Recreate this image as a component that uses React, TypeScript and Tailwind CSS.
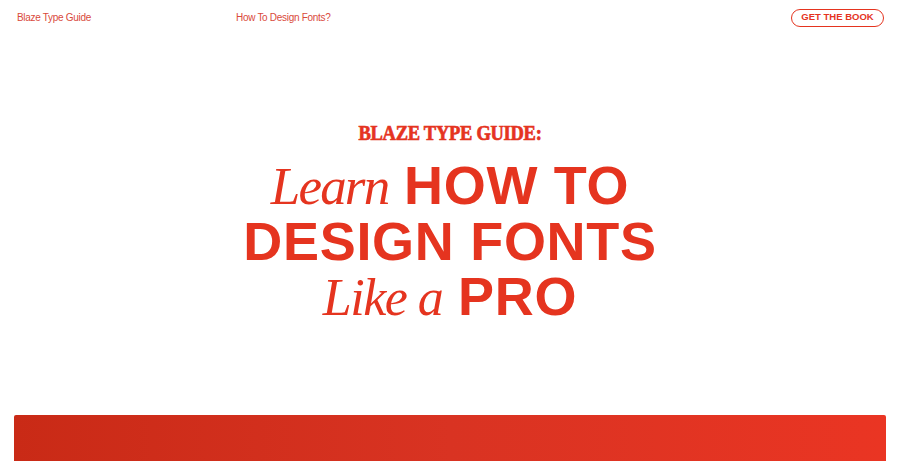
import React from "react";

const RED = "text-[#e5341f]";

export default function App() {
  return (
    <div className="min-h-[461px] w-full overflow-hidden bg-white font-['Liberation_Sans',Arial,sans-serif]">
      {/* top nav */}
      <header className="flex h-[35px] items-center px-[17px]">
        <a className="w-[219px] text-[10px] tracking-[-0.3px] text-[#d9493b]">Blaze Type Guide</a>
        <a className="text-[10px] tracking-[-0.3px] text-[#d9493b]">How To Design Fonts?</a>
        <button className="ml-auto mr-[-1px] flex h-[18px] w-[93px] items-center justify-center rounded-full border border-[#e5341f] text-[9.5px] font-bold text-[#e5341f]">
          GET THE BOOK
        </button>
      </header>

      {/* hero */}
      <section className={`flex flex-col items-center pt-[86px] ${RED}`}>
        <div className="h-[24px] origin-center scale-x-[0.88] font-['Liberation_Serif',serif] text-[21px] font-bold leading-[24px] tracking-[-0.3px] [-webkit-text-stroke:0.7px_#e5341f]">
          BLAZE TYPE GUIDE:
        </div>
        <h1 className="mt-[13px] flex flex-col items-center text-[54px] font-bold leading-[55px] tracking-[0.7px]">
          <span className="whitespace-nowrap">
            <em className="font-['Liberation_Serif',serif] text-[53px] font-normal tracking-[-1.8px]">Learn</em> HOW TO
          </span>
          <span className="whitespace-nowrap">DESIGN FONTS</span>
          <span className="whitespace-nowrap">
            <em className="font-['Liberation_Serif',serif] text-[52px] font-normal tracking-[-1.5px]">Like a</em> PRO
          </span>
        </h1>
      </section>

      {/* red panel */}
      <div className="mx-[14px] mt-[90px] h-[60px] rounded-t-[2px] bg-gradient-to-r from-[#c92a16] via-[#d93322] to-[#ea3523]" />
    </div>
  );
}
